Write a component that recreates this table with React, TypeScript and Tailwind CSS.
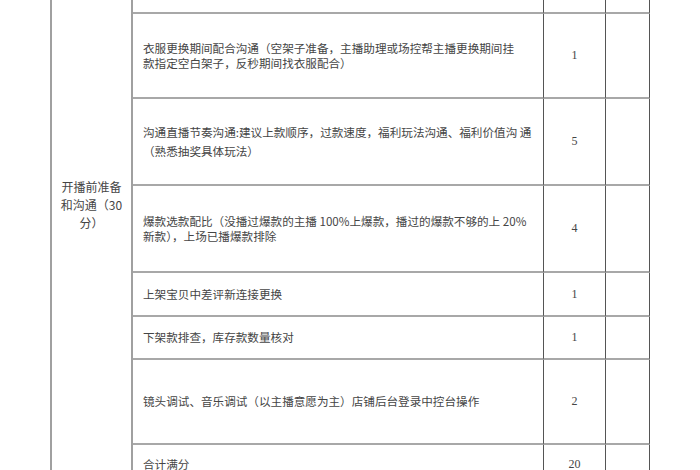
import React from "react";

const cjk = { fontFamily: '"Noto Sans CJK SC", "Noto Sans", sans-serif' };
const serif = { fontFamily: '"Liberation Serif", "Noto Sans CJK SC", serif' };

function Row({
  lines,
  score,
  leading = "leading-[15px]",
  top = false,
}: {
  lines: string[];
  score?: string;
  leading?: string;
  top?: boolean;
}) {
  const align = top ? "items-start pt-[12px]" : "items-center";
  return (
    <>
      <div
        className={`flex ${align} border-b-2 border-r border-b-[#a8a8a8] border-r-[#555] pl-[10px] pr-[4px] text-[11.6px] ${leading} text-[#454545]`}
        style={cjk}
      >
        <div>
          {lines.map((l, i) => (
            <div key={i} className="whitespace-nowrap">
              {l}
            </div>
          ))}
        </div>
      </div>
      <div
        className={`flex ${align} justify-center border-b-2 border-r border-b-[#a8a8a8] border-r-[#555] text-[12px] leading-[15px] text-[#454545]`}
        style={serif}
      >
        {score}
      </div>
      <div className="border-b-2 border-r border-b-[#a8a8a8] border-r-[#555]" />
    </>
  );
}

export default function App() {
  return (
    <div className="w-[700px] h-[470px] overflow-hidden bg-white">
      <div className="flex h-full pl-[50px]">
        <div className="grid h-full w-[600px] grid-cols-[83px_411px_62px_44px] grid-rows-[14px_85px_87px_87px_44px_43px_85px_1fr]">
          <div
            className="row-span-8 flex flex-col items-center border-l-2 border-r-2 border-[#a0a0a0] pt-[178px] text-[12px] leading-[18px] text-[#454545]"
            style={cjk}
          >
            <div>开播前准备</div>
            <div>和沟通（30</div>
            <div>分）</div>
          </div>
          <Row lines={[]} />
          <Row
            lines={[
              "衣服更换期间配合沟通（空架子准备，主播助理或场控帮主播更换期间挂",
              "款指定空白架子，反秒期间找衣服配合）",
            ]}
            score="1"
          />
          <Row
            lines={[
              "沟通直播节奏沟通:建议上款顺序，过款速度，福利玩法沟通、福利价值沟 通",
              "（熟悉抽奖具体玩法）",
            ]}
            score="5"
            leading="leading-[19px]"
          />
          <Row
            lines={[
              "爆款选款配比（没播过爆款的主播 100%上爆款，播过的爆款不够的上 20%",
              "新款），上场已播爆款排除",
            ]}
            score="4"
          />
          <Row lines={["上架宝贝中差评新连接更换"]} score="1" />
          <Row lines={["下架款排查，库存款数量核对"]} score="1" />
          <Row
            lines={["镜头调试、音乐调试（以主播意愿为主）店铺后台登录中控台操作"]}
            score="2"
          />
          <Row lines={["合计满分"]} score="20" top />
        </div>
      </div>
    </div>
  );
}
